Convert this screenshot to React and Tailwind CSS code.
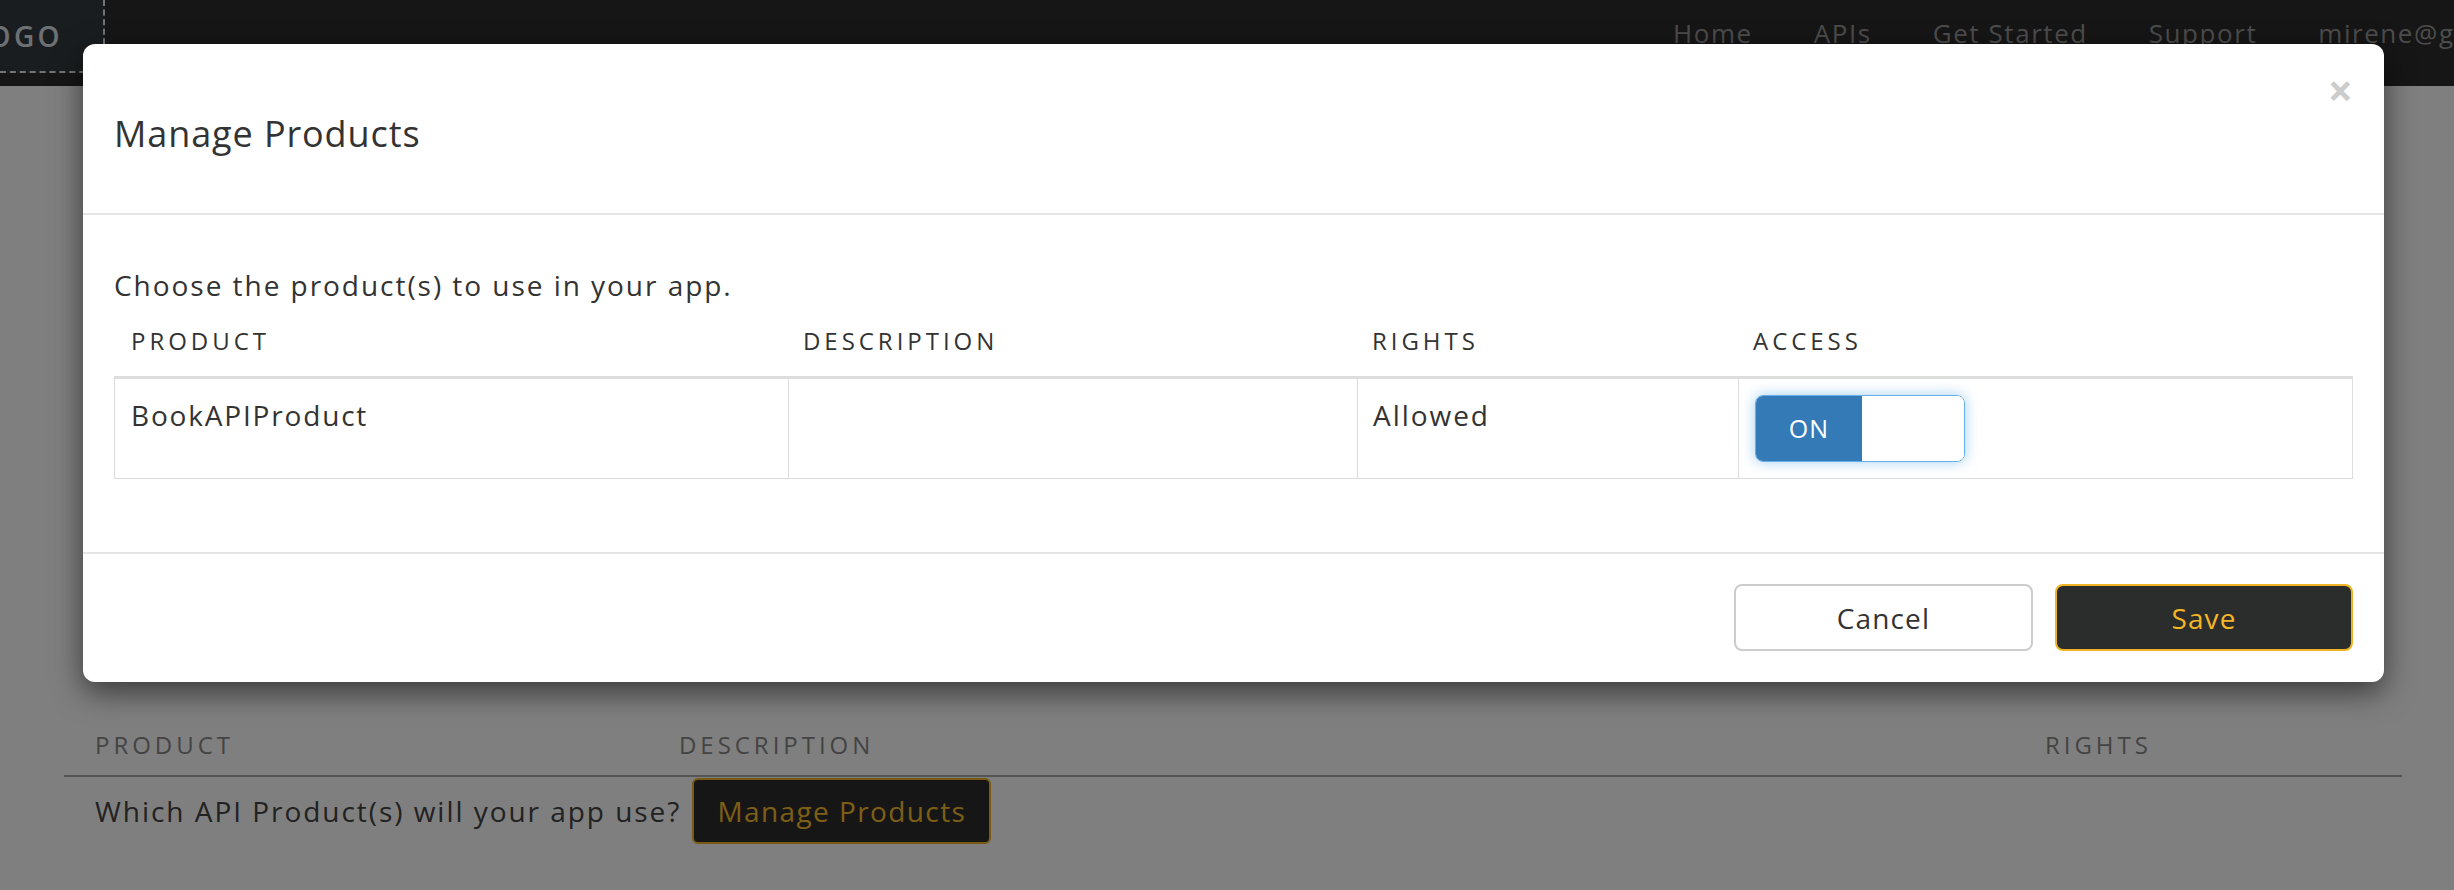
export default function App() {
  const cols = "grid grid-cols-[674px_569px_381px_1fr]";
  return (
    <div className="relative w-[2454px] h-[890px] overflow-hidden bg-white font-['Open_Sans',sans-serif] text-[#333]">
      {/* Navbar */}
      <div className="h-[86px] bg-[#2c2c2c] flex items-start overflow-hidden whitespace-nowrap">
        <div className="w-[105px] h-[73px] shrink-0 bg-[#343a3e] border-r-2 border-b-2 border-dashed border-[#e8e8e8] flex items-center justify-end pr-[40px] overflow-hidden">
          <span className="text-[28px] font-semibold tracking-[0.12em] text-[#dde3e8]">LOGO</span>
        </div>
        <div className="flex gap-[61px] ml-[1568px] pt-[14px] text-[26px] tracking-[0.06em] text-[#999]">
          <span>Home</span>
          <span>APIs</span>
          <span>Get Started</span>
          <span>Support</span>
          <span>mirene@gmail.com</span>
        </div>
      </div>

      {/* Page content */}
      <div className="ml-[64px] w-[2338px] mt-[633px]">
        <div className="grid grid-cols-[584px_1366px_1fr] h-[58px] border-b-2 border-[#aaa] items-center pb-[4px] text-[24px] tracking-[0.165em] text-[#888]">
          <div className="pl-[31px]">PRODUCT</div>
          <div className="pl-[31px]">DESCRIPTION</div>
          <div className="pl-[31px]">RIGHTS</div>
        </div>
        <div className="flex items-center pl-[31px] pt-[1px] gap-[11px]">
          <span className="text-[28px] tracking-[0.07em] text-[#444]">Which API Product(s) will your app use?</span>
          <button className="w-[299px] h-[66px] bg-[#2c2c2c] border-2 border-[#f2b424] rounded-[6px] text-[28px] tracking-[0.05em] text-[#f8bd2e]">
            Manage Products
          </button>
        </div>
      </div>

      {/* Overlay */}
      <div className="absolute inset-0 bg-black/50">
        <div className="absolute left-[83px] top-[44px] w-[2301px] h-[638px] bg-white rounded-[12px] shadow-[0_10px_30px_rgba(0,0,0,0.55)] flex flex-col">
          {/* Header */}
          <div className="h-[171px] shrink-0 border-b-2 border-[#e5e5e5] flex justify-between px-[31px]">
            <h4 className="self-center pt-[10px] text-[36px] tracking-[0.025em] text-[#333]">Manage Products</h4>
            <button className="self-start mt-[24px] text-[44px] font-bold leading-none text-[#cccccc]">×</button>
          </div>
          {/* Body */}
          <div className="h-[337px] shrink-0 px-[31px] pt-[50px]">
            <p className="text-[28px] leading-[40px] tracking-[0.07em]">Choose the product(s) to use in your app.</p>
            <div className={`${cols} h-[71px] items-center text-[24px] tracking-[0.165em]`}>
              <div className="pl-[17px]">PRODUCT</div>
              <div className="pl-[15px]">DESCRIPTION</div>
              <div className="pl-[15px]">RIGHTS</div>
              <div className="pl-[15px]">ACCESS</div>
            </div>
            <div className={`${cols} border-x border-b border-t-[3px] border-[#dddddd] h-[103px]`}>
              <div className="border-r border-[#dddddd] pl-[16px] pt-[16px] text-[28px] leading-[40px] tracking-[0.065em]">BookAPIProduct</div>
              <div className="border-r border-[#dddddd]"></div>
              <div className="border-r border-[#dddddd] pl-[15px] pt-[16px] text-[28px] leading-[40px] tracking-[0.07em]">Allowed</div>
              <div className="pl-[16px] pt-[16px]">
                <div className="w-[210px] h-[67px] flex rounded-[8px] border border-[#66afe9] overflow-hidden shadow-[0_0_14px_rgba(102,175,233,0.6)]">
                  <div className="w-[106px] bg-[#337ab7] text-white text-[25px] tracking-[0.04em] flex items-center justify-center">ON</div>
                  <div className="flex-1 bg-white"></div>
                </div>
              </div>
            </div>
          </div>
          {/* Footer */}
          <div className="flex-1 border-t-2 border-[#e5e5e5] flex justify-end items-start pt-[30px] pr-[31px] gap-[22px]">
            <button className="w-[299px] h-[67px] border-2 border-[#cccccc] rounded-[8px] bg-white text-[28px] tracking-[0.04em] text-[#333]">Cancel</button>
            <button className="w-[298px] h-[67px] border-2 border-[#f0b323] rounded-[8px] bg-[#2b2d2c] text-[28px] tracking-[0.04em] text-[#f5b625]">Save</button>
          </div>
        </div>
      </div>
    </div>
  );
}
